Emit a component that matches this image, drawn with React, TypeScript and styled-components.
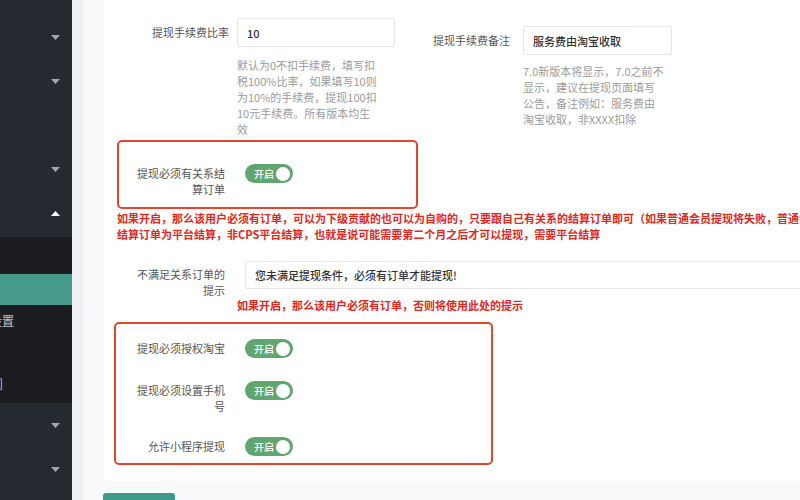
import styled, { createGlobalStyle } from 'styled-components';

// ─── Global ───────────────────────────────────────────────────────────────────

const GlobalStyle = createGlobalStyle`
  html, body {
    margin: 0;
    padding: 0;
    overflow: hidden;
    background: #f3f4f6;
  }
  * {
    box-sizing: border-box;
  }
  body {
    font-family: "Noto Sans CJK SC", "Noto Sans", sans-serif;
    font-size: 11px;
    color: #555;
  }
`;

// ─── Layout ───────────────────────────────────────────────────────────────────

const Page = styled.div`
  display: flex;
  width: 800px;
  height: 500px;
  overflow: hidden;
`;

const Sidebar = styled.nav`
  flex: none;
  width: 72px;
  height: 100%;
  background: #252930;
  padding-top: 15px;
`;

const NavItem = styled.div`
  height: 44px;
  display: flex;
  align-items: center;
  justify-content: flex-end;
  padding-right: 12px;
`;

const SubMenu = styled.div`
  background: #1b1d21;
  padding: 37px 0 5px;
  margin-top: 2px;
`;

const SubItem = styled.div<{ $active?: boolean; $end?: number }>`
  height: 31px;
  display: flex;
  align-items: center;
  justify-content: flex-end;
  overflow: hidden;
  white-space: nowrap;
  padding-right: ${({ $end = 14 }) => 72 - $end}px;
  background: ${({ $active }) => ($active ? '#459a8b' : 'transparent')};
  color: #c4c6ca;
  font-size: 12px;
`;

const Main = styled.main`
  flex: 1;
  min-width: 0;
  padding-left: 11px;
  background: #eef0f3;
`;

const Panel = styled.div`
  height: 100%;
  background: #f8f9fa;
  padding-left: 21px;
`;

const Card = styled.section`
  width: 760px;
  background: #fff;
  padding: 18px 0 16px;
`;

const SaveButton = styled.button`
  display: block;
  margin: 12px 0 0 -1px;
  width: 72px;
  height: 44px;
  border: none;
  border-radius: 3px;
  background: #3f9a89;
  color: #fff;
  font-family: inherit;
  font-size: 12px;
  padding-top: 20px;
`;

// ─── Form parts ───────────────────────────────────────────────────────────────

const TopRow = styled.div`
  display: flex;
  align-items: flex-start;
`;

const Field = styled.div<{ $labelWidth: number; $gap: number; $offset?: number }>`
  display: grid;
  grid-template-columns: ${({ $labelWidth }) => $labelWidth}px auto;
  column-gap: ${({ $gap }) => $gap}px;
  margin-top: ${({ $offset = 0 }) => $offset}px;
  margin-left: ${({ $offset = 0 }) => ($offset ? 15 : 0)}px;
`;

const Label = styled.label<{ $padTop?: number }>`
  text-align: right;
  line-height: 16px;
  padding-top: ${({ $padTop = 6 }) => $padTop}px;
  color: #555;
`;

const TextInput = styled.div<{ $width: number; $height?: number }>`
  width: ${({ $width }) => $width}px;
  height: ${({ $height = 29 }) => $height}px;
  border: 1px solid #e6e6e6;
  border-radius: 2px;
  padding: 0 9px;
  display: flex;
  align-items: center;
  color: #333;
  font-weight: 500;
  white-space: nowrap;
`;

const Help = styled.div<{ $gapTop: number }>`
  grid-column: 2;
  margin-top: ${({ $gapTop }) => $gapTop}px;
  line-height: 16px;
  color: #9b9b9b;
  white-space: nowrap;
`;

const OutlineBox = styled.div<{ $left: number; $top: number; $width: number; $pad: string }>`
  margin: ${({ $top, $left }) => `${$top}px 0 0 ${$left}px`};
  width: ${({ $width }) => $width}px;
  border: 2px solid #e4452f;
  border-radius: 5px;
  padding: ${({ $pad }) => $pad};
  display: flex;
  flex-direction: column;
  gap: 23px;
`;

const SwitchRow = styled.div<{ $labelWidth: number }>`
  display: grid;
  grid-template-columns: ${({ $labelWidth }) => $labelWidth}px auto;
  column-gap: 20px;
  align-items: start;
`;

// label text is kept to eight characters per line, as in the original form
const SwitchLabel = styled.span<{ $inset: number }>`
  text-align: right;
  line-height: 16px;
  padding: 1px 0 0 ${({ $inset }) => $inset}px;
  color: #555;
`;

const Switch = styled.span`
  width: 48px;
  height: 19px;
  border-radius: 10px;
  background: #61a66e;
  display: flex;
  align-items: center;
  justify-content: space-between;
  padding: 0 3px 0 9px;
  color: #fff;
  font-size: 10px;
  font-weight: 500;

  &::after {
    content: '';
    width: 14px;
    height: 14px;
    border-radius: 50%;
    background: #fff;
  }
`;

const Warning = styled.div<{ $left: number; $top: number }>`
  margin: ${({ $top, $left }) => `${$top}px 0 0 ${$left}px`};
  color: #e2271d;
  font-weight: 700;
  line-height: 16px;
  white-space: nowrap;
`;

const TipField = styled.div`
  display: grid;
  grid-template-columns: 106px auto;
  column-gap: 20px;
  margin: 19px 0 0 15px;
`;

const TipLabel = styled(Label)`
  grid-row: span 2;
  padding-left: 12px;
`;

const TipWarning = styled(Warning)`
  grid-column: 2;
`;

// ─── Icons ────────────────────────────────────────────────────────────────────

function Caret({ up }: { up?: boolean }) {
  return (
    <svg width="9" height="5" viewBox="0 0 9 5">
      <polygon
        points={up ? '0,5 9,5 4.5,0' : '0,0 9,0 4.5,5'}
        fill={up ? '#ffffff' : '#a3a7ad'}
      />
    </svg>
  );
}

function Toggle({ label, wide }: { label: string; wide?: boolean }) {
  return (
    <SwitchRow $labelWidth={wide ? 109 : 106}>
      <SwitchLabel $inset={wide ? 15 : 12}>{label}</SwitchLabel>
      <Switch>开启</Switch>
    </SwitchRow>
  );
}

// ─── Component ────────────────────────────────────────────────────────────────

export default function App() {
  return (
    <>
      <GlobalStyle />
      <Page>
        <Sidebar>
          <NavItem><Caret /></NavItem>
          <NavItem><Caret /></NavItem>
          <NavItem />
          <NavItem><Caret /></NavItem>
          <NavItem><Caret up /></NavItem>
          <SubMenu>
            <SubItem $active />
            <SubItem>提现设置</SubItem>
            <SubItem />
            <SubItem $end={3}>[提现记录]</SubItem>
          </SubMenu>
          <NavItem><Caret /></NavItem>
          <NavItem><Caret /></NavItem>
        </Sidebar>

        <Main>
          <Panel>
            <Card>
              <TopRow>
                <Field $labelWidth={125} $gap={8}>
                  <Label>提现手续费比率</Label>
                  <TextInput $width={158}>10</TextInput>
                  <Help $gapTop={10}>
                    默认为0不扣手续费，填写扣<br />
                    税100%比率，如果填写10则<br />
                    为10%的手续费，提现100扣<br />
                    10元手续费。所有版本均生<br />
                    效
                  </Help>
                </Field>
                <Field $labelWidth={100} $gap={13} $offset={8}>
                  <Label>提现手续费备注</Label>
                  <TextInput $width={149}>服务费由淘宝收取</TextInput>
                  <Help $gapTop={8}>
                    7.0新版本将显示，7.0之前不<br />
                    显示，建议在提现页面填写<br />
                    公告，备注例如：服务费由<br />
                    淘宝收取，非XXXX扣除
                  </Help>
                </Field>
              </TopRow>

              <OutlineBox $left={13} $top={3} $width={301} $pad="22px 0 10px">
                <Toggle label="提现必须有关系结算订单" />
              </OutlineBox>
              <Warning $left={13} $top={1}>
                如果开启，那么该用户必须有订单，可以为下级贡献的也可以为自购的，只要跟自己有关系的结算订单即可（如果普通会员提现将失败，普通会员的<br />
                结算订单为平台结算，非CPS平台结算，也就是说可能需要第二个月之后才可以提现，需要平台结算
              </Warning>

              <TipField>
                <TipLabel $padTop={5}>不满足关系订单的提示</TipLabel>
                <TextInput $width={600} $height={28}>您未满足提现条件，必须有订单才能提现!</TextInput>
                <TipWarning $left={-8} $top={8}>
                  如果开启，那么该用户必须有订单，否则将使用此处的提示
                </TipWarning>
              </TipField>

              <OutlineBox $left={10} $top={9} $width={379} $pad="15px 0 7px">
                <Toggle wide label="提现必须授权淘宝" />
                <Toggle wide label="提现必须设置手机号" />
                <Toggle wide label="允许小程序提现" />
              </OutlineBox>
            </Card>
            <SaveButton>保存设置</SaveButton>
          </Panel>
        </Main>
      </Page>
    </>
  );
}
